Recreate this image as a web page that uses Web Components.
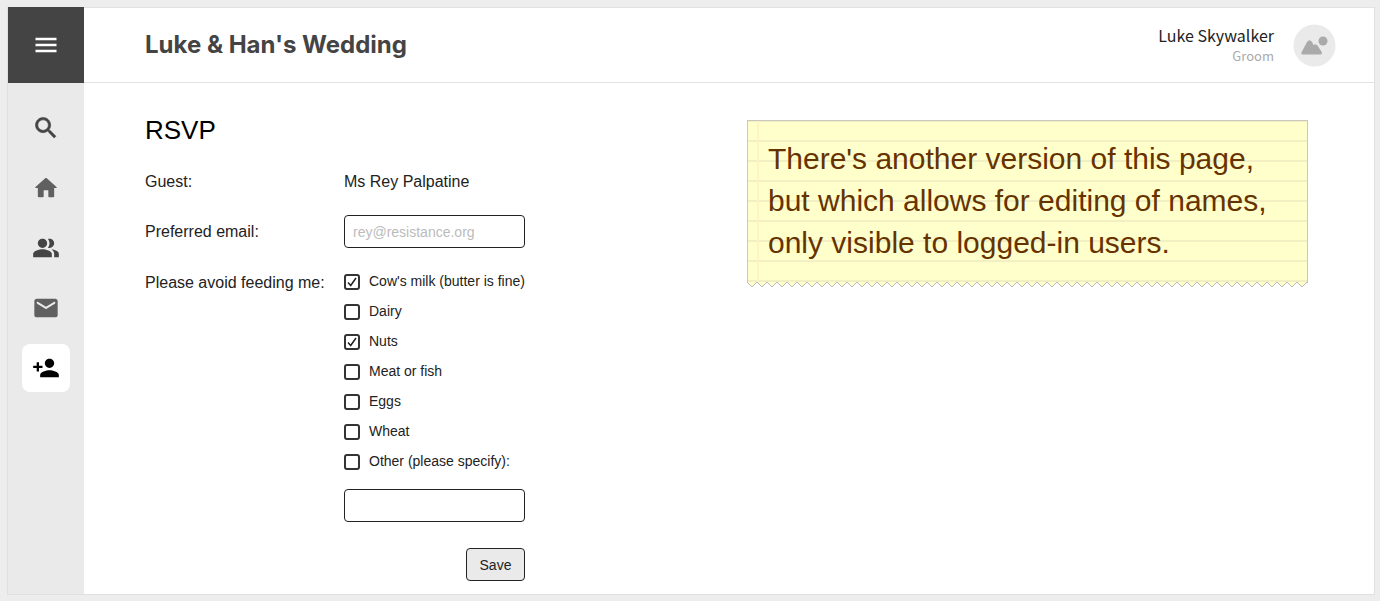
<!DOCTYPE html>
<html lang="en">
<head>
<meta charset="utf-8">
<meta name="viewport" content="width=device-width, initial-scale=1">
<title>Luke &amp; Han's Wedding</title>
<style>
  body { margin: 0; background: #ededed; color: #222; font: 16px/20px "Liberation Sans", Arial, sans-serif; }
</style>
</head>
<body>
<wedding-app></wedding-app>

<script>
const define = (name, html, setup) => {
  const template = document.createElement('template');
  template.innerHTML = html;
  customElements.define(name, class extends HTMLElement {
    constructor() {
      super();
      this.attachShadow({ mode: 'open' }).append(template.content.cloneNode(true));
    }
    connectedCallback() { if (setup) setup(this, this.shadowRoot); }
  });
};

const ICONS = {
  menu: 'M3 18.2h18v-2.200H3v2.200zm0-5.100h18v-2.200H3v2.200zm0-7.300v2.200h18V5.800H3z',
  search: 'M15.5 14h-.79l-.28-.27C15.41 12.59 16 11.11 16 9.5 16 5.91 13.09 3 9.5 3S3 5.91 3 9.5 5.91 16 9.5 16c1.61 0 3.09-.59 4.23-1.57l.27.28v.79l5 4.99L20.49 19l-4.99-5zm-6 0C7.01 14 5 11.99 5 9.5S7.01 5 9.5 5 14 7.01 14 9.5 11.99 14 9.5 14z',
  home: 'M10 19v-5h4v5c0 .55.45 1 1 1h3c.55 0 1-.45 1-1v-7h1.7c.46 0 .68-.57.33-.87L12.67 3.6c-.38-.34-.96-.34-1.34 0l-8.36 7.53c-.34.3-.13.87.33.87H5v7c0 .55.45 1 1 1h3c.55 0 1-.45 1-1z',
  group: 'M16.67 13.13C18.04 14.06 19 15.32 19 17v3h4v-3c0-2.18-3.57-3.47-6.33-3.87zM15 12c2.21 0 4-1.79 4-4s-1.79-4-4-4c-.47 0-.91.1-1.33.24C14.5 5.27 15 6.58 15 8s-.5 2.73-1.33 3.76c.42.14.86.24 1.33.24zM9 12c2.21 0 4-1.79 4-4s-1.79-4-4-4-4 1.79-4 4 1.79 4 4 4zm0 1c-2.67 0-8 1.34-8 4v3h16v-3c0-2.66-5.33-4-8-4z',
  mail: 'M20 4H4c-1.1 0-1.99.9-1.99 2L2 18c0 1.100.9 2 2 2h16c1.100 0 2-.9 2-2V6c0-1.100-.9-2-2-2zm-.4 4.250l-7.070 4.420c-.32.2-.74.2-1.060 0L4.400 8.250c-.25-.16-.4-.43-.4-.72 0-.67.73-1.070 1.300-.72L12 11l6.700-4.190c.57-.35 1.300.05 1.300.72 0 .29-.15.56-.4.720z',
  'person-add': 'M15 12c2.210 0 4-1.790 4-4s-1.790-4-4-4-4 1.790-4 4 1.790 4 4 4zm-9-2V7H4v3H1v2h3v3h2v-3h3v-2H6zm9 4c-2.670 0-8 1.340-8 4v2h16v-2c0-2.660-5.330-4-8-4z'
};

define('ui-icon', `
  <style>
    :host { display: block; width: 28px; height: 28px; }
    svg { display: block; width: 100%; height: 100%; fill: currentColor; }
    :host([name="search"]) path { stroke: currentColor; stroke-width: 0.500; }
  </style>
  <svg viewBox="0 0 24 24" aria-hidden="true"><path/></svg>`,
  (host, root) => root.querySelector('path').setAttribute('d', ICONS[host.getAttribute('name')]));

define('nav-item', `
  <style>
    :host { display: block; color: #444; }
    :host([soft]) { color: #606060; }
    :host([active]) { color: #000; }
    a { display: grid; place-items: center; width: 48px; height: 48px; border-radius: 8px; color: inherit; }
    :host([active]) a { background: #fff; }
  </style>
  <a href="#"><ui-icon></ui-icon></a>`,
  (host, root) => {
    root.querySelector('a').setAttribute('aria-label', host.getAttribute('label'));
    const icon = document.createElement('ui-icon');
    icon.setAttribute('name', host.getAttribute('icon'));
    root.querySelector('ui-icon').replaceWith(icon);
  });

define('side-bar', `
  <style>
    :host { display: flex; flex-direction: column; width: 76px; background: #eaeaea; }
    button { display: grid; place-items: center; width: 100%; height: 76px; padding: 0; border: 0; background: #444; color: #fff; }
    nav { display: flex; flex-direction: column; align-items: center; gap: 12px; padding-top: 21px; }
  </style>
  <button type="button" aria-label="Menu"><ui-icon name="menu"></ui-icon></button>
  <nav>
    <nav-item icon="search" label="Search"></nav-item>
    <nav-item icon="home" label="Home" soft></nav-item>
    <nav-item icon="group" label="Guests"></nav-item>
    <nav-item icon="mail" label="Messages" soft></nav-item>
    <nav-item icon="person-add" label="RSVP" active></nav-item>
  </nav>`);

define('top-bar', `
  <style>
    :host { display: flex; box-sizing: border-box; align-items: center; justify-content: space-between; height: 76px; padding: 0 38px 0 61px; border: solid #e2e2e2; border-width: 1px 0; }
    h1 { margin: 0; color: #444; font: 700 24px/28px Inter, sans-serif; }
    .user { display: flex; align-items: center; gap: 19px; }
    .who { text-align: right; font-family: "Noto Sans CJK JP", "Noto Sans", sans-serif; }
    .name { font-size: 16px; line-height: 22px; }
    .role { font-size: 13px; line-height: 20px; color: #aaa; }
    svg { display: block; width: 43px; height: 43px; }
  </style>
  <h1><slot name="title"></slot></h1>
  <div class="user">
    <div class="who"><div class="name"><slot name="name"></slot></div><div class="role"><slot name="role"></slot></div></div>
    <svg viewBox="0 0 43 43" aria-hidden="true">
      <circle cx="21.500" cy="21.500" r="21" fill="#eaeaea"/>
      <g fill="#aaa"><circle cx="30" cy="17" r="4.500"/>
      <path d="M10 30.500Q7.500 30.500 8.700 28L14 18Q16.500 14.500 19 18L20.700 21.200Q22.700 18.800 24.700 21.800L28.700 28Q29.800 30.500 27 30.500Z"/></g>
    </svg>
  </div>`);

define('check-option', `
  <style>
    :host { display: block; box-sizing: border-box; height: 30px; padding-top: 2px; }
    label { display: flex; align-items: flex-start; gap: 9px; font-size: 14px; line-height: 14px; }
    input { appearance: none; box-sizing: border-box; flex: none; width: 16px; height: 16px; margin: 0; border: 2px solid #333; border-radius: 3px; background: #fff; }
    input:checked { background: #fff url("data:image/svg+xml,%3Csvg xmlns='http://www.w3.org/2000/svg' viewBox='0 0 12 12'%3E%3Cpath d='M2 6.500L4.700 9.500L10 2' fill='none' stroke='%23222' stroke-width='1.500'/%3E%3C/svg%3E") center / 12px; }
  </style>
  <label><input type="checkbox"><span><slot></slot></span></label>`,
  (host, root) => { root.querySelector('input').checked = host.hasAttribute('checked'); });

define('rsvp-form', `
  <style>
    :host { display: block; }
    h2 { margin: 0 0 26px; font-size: 26px; line-height: 32px; font-weight: 400; color: #000; }
    form { display: grid; grid-template-columns: 199px 181px; align-items: center; }
    .guest { padding-bottom: 23px; }
    .caption { align-self: start; padding-top: 25px; }
    .choices { padding-top: 24px; }
    input { box-sizing: border-box; width: 100%; height: 33px; padding: 0 8px; border: 1px solid #222; border-radius: 4px; background: #fff; color: #222; font: 14px/20px "Liberation Sans", Arial, sans-serif; }
    input::placeholder { color: #bbb; opacity: 1; }
    .other { display: block; margin-top: 7px; }
    button { grid-column: 2; justify-self: end; width: 59px; height: 33px; margin-top: 26px; padding: 0; border: 1px solid #222; border-radius: 4px; background: #eaeaea; color: #222; font: 14px/20px "Liberation Sans", Arial, sans-serif; }
  </style>
  <h2>RSVP</h2>
  <form>
    <div class="guest">Guest:</div><div class="guest">Ms Rey Palpatine</div>
    <label for="email">Preferred email:</label>
    <input id="email" type="email" placeholder="rey@resistance.org">
    <div class="caption" id="avoid">Please avoid feeding me:</div>
    <div class="choices" role="group" aria-labelledby="avoid">
      <check-option checked>Cow's milk (butter is fine)</check-option>
      <check-option>Dairy</check-option>
      <check-option checked>Nuts</check-option>
      <check-option>Meat or fish</check-option>
      <check-option>Eggs</check-option>
      <check-option>Wheat</check-option>
      <check-option>Other (please specify):</check-option>
      <input class="other" type="text" aria-label="Other foods to avoid">
    </div>
    <button type="button">Save</button>
  </form>`);

define('paper-note', `
  <style>
    :host { display: block; color: #630; }
    .sheet {
      padding: 17px 20px 18px; border: solid #c8c8c0; border-width: 1px 1px 0;
      font-size: 30px; line-height: 42px;
      background:
        linear-gradient(90deg, transparent 9px, #fff3c4 9px 11px, transparent 11px),
        linear-gradient(#f2efc3 0 2px, #ffc 2px) 0 19px / 100% 20px;
    }
    p { margin: 0; }
    svg { display: block; width: 100%; height: 6px; }
  </style>
  <div class="sheet"><p><slot></slot></p></div>
  <svg aria-hidden="true">
    <defs><pattern id="teeth" width="10" height="6" patternUnits="userSpaceOnUse">
      <path d="M0 0L5 5L10 0Z" fill="#ffc"/><path d="M0 0L5 5L10 0" fill="none" stroke="#bbb"/>
    </pattern></defs>
    <rect width="100%" height="6" fill="url(#teeth)"/>
  </svg>`);

define('wedding-app', `
  <style>
    :host { display: flex; box-sizing: border-box; min-height: 100vh; padding: 7px 5px 6px 7px; }
    .frame { display: flex; flex: 1; border: 1px solid #e0e0e0; border-top: 0; background: #fff; }
    .page { flex: 1; min-width: 0; }
    main { display: flex; justify-content: space-between; align-items: flex-start; gap: 40px; padding: 31px 66px 13px 61px; }
    rsvp-form { flex: none; }
    paper-note { flex: 0 1 561px; margin-top: 6px; }
  </style>
  <div class="frame">
    <side-bar></side-bar>
    <div class="page">
      <top-bar>
        <span slot="title">Luke &amp; Han's Wedding</span>
        <span slot="name">Luke Skywalker</span>
        <span slot="role">Groom</span>
      </top-bar>
      <main>
        <rsvp-form></rsvp-form>
        <paper-note>There's another version of this page, but which allows for editing of names, only visible to logged-in users.</paper-note>
      </main>
    </div>
  </div>`);
</script>
</body>
</html>
